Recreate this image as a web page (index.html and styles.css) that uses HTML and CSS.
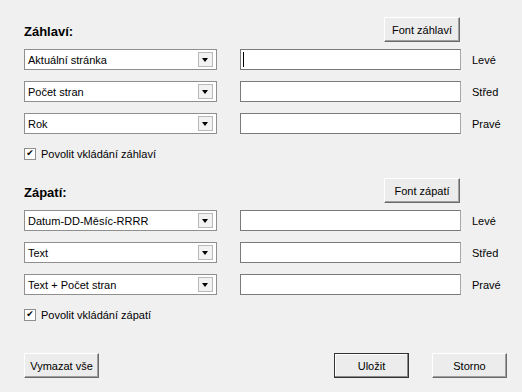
FILE: index.html
```html
<!DOCTYPE html>
<html lang="cs">
<head>
    <meta charset="UTF-8">
    <title>Záhlaví a zápatí</title>
    <link rel="stylesheet" href="styles.css">
</head>
<body>
    <div class="dialog">
        <section class="group">
            <div class="group-head">
                <h2>Záhlaví:</h2>
                <button class="btn">Font záhlaví</button>
            </div>
            <div class="row">
                <div class="combo"><span>Aktuální stránka</span><span class="combo-btn"></span></div>
                <div class="field"><span class="caret"></span></div>
                <span class="pos">Levé</span>
            </div>
            <div class="row">
                <div class="combo"><span>Počet stran</span><span class="combo-btn"></span></div>
                <div class="field"></div>
                <span class="pos">Střed</span>
            </div>
            <div class="row">
                <div class="combo"><span>Rok</span><span class="combo-btn"></span></div>
                <div class="field"></div>
                <span class="pos">Pravé</span>
            </div>
            <label class="check"><span class="box">&#10004;</span>Povolit vkládání záhlaví</label>
        </section>

        <section class="group">
            <div class="group-head">
                <h2>Zápatí:</h2>
                <button class="btn">Font zápatí</button>
            </div>
            <div class="row">
                <div class="combo"><span>Datum-DD-Měsíc-RRRR</span><span class="combo-btn"></span></div>
                <div class="field"></div>
                <span class="pos">Levé</span>
            </div>
            <div class="row">
                <div class="combo"><span>Text</span><span class="combo-btn"></span></div>
                <div class="field"></div>
                <span class="pos">Střed</span>
            </div>
            <div class="row">
                <div class="combo"><span>Text + Počet stran</span><span class="combo-btn"></span></div>
                <div class="field"></div>
                <span class="pos">Pravé</span>
            </div>
            <label class="check"><span class="box">&#10004;</span>Povolit vkládání zápatí</label>
        </section>

        <div class="actions">
            <button class="btn btn-wide">Vymazat vše</button>
            <div class="spacer"></div>
            <button class="btn btn-wide btn-default">Uložit</button>
            <button class="btn btn-wide">Storno</button>
        </div>
    </div>
</body>
</html>
```
FILE: styles.css
```css
body {
    margin: 0;
    background-color: #f0f0f0;
    font-family: "Liberation Sans", Arial, sans-serif;
    font-size: 11px;
    color: #000;
}
.dialog {
    width: 522px;
    height: 392px;
    box-sizing: border-box;
    padding: 17px 0 0 24px;
}
.group + .group {
    margin-top: 18px;
}
.group-head {
    display: flex;
    align-items: flex-end;
    justify-content: space-between;
    width: 436px;
    height: 25px;
}
h2 {
    margin: 0 0 4px 0;
    font-size: 13px;
    font-weight: bold;
    line-height: 13px;
}
.btn {
    height: 25px;
    padding: 0;
    font-family: inherit;
    font-size: 11px;
    color: #000;
    background-color: #ececec;
    border: 1px solid;
    border-color: #fff #6a6a6a #6a6a6a #fff;
    box-shadow: inset -1px -1px 0 #a0a0a0;
}
.group-head .btn {
    width: 76px;
}
.row {
    display: flex;
    align-items: center;
    height: 21px;
    margin-top: 11px;
}
.group-head + .row {
    margin-top: 7px;
}
.combo {
    display: flex;
    align-items: center;
    justify-content: space-between;
    box-sizing: border-box;
    width: 193px;
    height: 21px;
    padding: 0 3px 0 3px;
    background-color: #fff;
    border: 1px solid #8f8f8f;
}
.combo-btn {
    position: relative;
    box-sizing: border-box;
    width: 15px;
    height: 15px;
    background-color: #f2f2f2;
    border: 1px solid #b9b9b9;
}
.combo-btn::after {
    content: "";
    position: absolute;
    left: 3px;
    top: 5px;
    border-left: 3.5px solid transparent;
    border-right: 3.5px solid transparent;
    border-top: 4px solid #000;
}
.field {
    position: relative;
    box-sizing: border-box;
    width: 221px;
    height: 21px;
    margin-left: 23px;
    background-color: #fff;
    border: 1px solid #7a7a7a;
    border-right-color: #a8a8a8;
}
.caret {
    position: absolute;
    left: 2px;
    top: 2px;
    width: 1px;
    height: 15px;
    background-color: #000;
}
.pos {
    margin-left: 11px;
}
.check {
    display: flex;
    align-items: center;
    height: 13px;
    margin-top: 13px;
}
.box {
    display: flex;
    align-items: center;
    justify-content: center;
    box-sizing: border-box;
    width: 12px;
    height: 12px;
    margin-right: 5px;
    background-color: #fff;
    border: 1px solid #8f8f8f;
    font-family: "DejaVu Sans", sans-serif;
    font-size: 9px;
    font-weight: bold;
    line-height: 1;
}
.actions {
    display: flex;
    width: 483px;
    margin-top: 32px;
}
.spacer {
    flex: 1;
}
.btn-wide {
    width: 75px;
}
.btn-wide + .btn-wide {
    margin-left: 23px;
}
.btn-default {
    border-color: #333;
    box-shadow: inset -1px -1px 0 #8a8a8a, inset 1px 1px 0 #fff;
}
```
